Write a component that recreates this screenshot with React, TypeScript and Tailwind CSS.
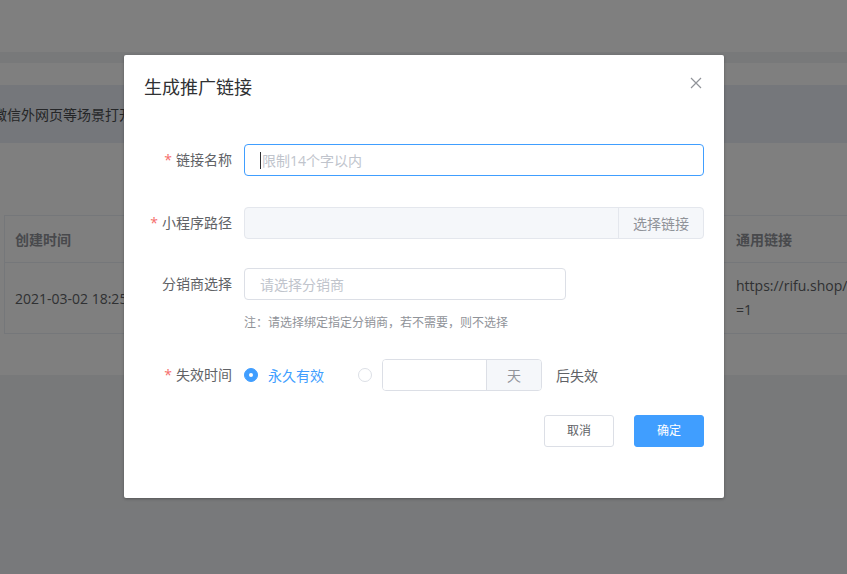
import React from 'react';

const FONT = '"Open Sans", "Noto Sans CJK SC", Helvetica, Arial, sans-serif';

function Label({ text, required }: { text: string; required?: boolean }) {
  return (
    <div className="w-[100px] shrink-0 pr-[12px] text-right text-[14px] leading-[20px] text-[#606266]">
      {required && <span className="mr-[4px] text-[#f56c6c]">*</span>}
      {text}
    </div>
  );
}

function Radio({ checked }: { checked?: boolean }) {
  if (checked) {
    return (
      <span className="flex h-[14px] w-[14px] items-center justify-center rounded-full border border-[#409eff] bg-[#409eff]">
        <span className="h-[4px] w-[4px] rounded-full bg-white" />
      </span>
    );
  }
  return <span className="h-[14px] w-[14px] rounded-full border border-[#dcdfe6] bg-white" />;
}

function BackgroundPage() {
  return (
    <div className="flex h-full w-full flex-col bg-[#f0f2f5]">
      <div className="h-[52px] shrink-0 bg-white" />
      <div className="h-[11px] shrink-0" />
      <div className="shrink-0 bg-white">
        <div className="h-[22px]" />
        <div className="flex h-[58px] items-center overflow-hidden bg-[#ebeff6] text-[14px] text-[#4a4c50]">
          <span className="ml-[-7px] whitespace-nowrap">微信外网页等场景打开，可复制链接后发送给用户使用</span>
        </div>
        <div className="h-[72px]" />
        <div className="ml-[4px] flex border-l border-[#ebeef5]">
          <div className="w-[300px] shrink-0">
            <div className="flex h-[48px] items-center border-y border-[#ebeef5] pl-[10px] text-[14px] font-bold text-[#909399]">
              创建时间
            </div>
            <div className="flex h-[71px] items-center border-b border-[#ebeef5] pl-[10px] text-[14px] text-[#606266]">
              2021-03-02 18:25:12
            </div>
          </div>
          <div className="w-[420px] shrink-0">
            <div className="h-[48px] border-y border-[#ebeef5]" />
            <div className="h-[71px] border-b border-[#ebeef5]" />
          </div>
          <div className="w-[130px] shrink-0 overflow-hidden">
            <div className="flex h-[48px] items-center border-y border-[#ebeef5] pl-[11px] text-[14px] font-bold text-[#909399]">
              通用链接
            </div>
            <div className="flex h-[71px] flex-col justify-center border-b border-[#ebeef5] pl-[11px] text-[14px] leading-[24px] text-[#606266]">
              <span className="whitespace-nowrap">https://rifu.shop/pages/index?id</span>
              <span>=1</span>
            </div>
          </div>
        </div>
        <div className="h-[41px]" />
      </div>
    </div>
  );
}

function Dialog() {
  return (
    <div className="absolute left-[124px] top-[55px] flex h-[443px] w-[600px] flex-col rounded-[2px] bg-white shadow-[0_1px_3px_rgba(0,0,0,0.3)]">
      <div className="px-[20px] pt-[20px]">
        <div className="h-[24px] text-[18px] leading-[24px] text-[#303133]">生成推广链接</div>
      </div>
      <button className="absolute right-[22px] top-[22px] flex h-[12px] w-[12px] items-center justify-center">
        <svg width="12" height="12" viewBox="0 0 12 12" fill="none">
          <path d="M1 1L11 11M11 1L1 11" stroke="#909399" strokeWidth="1.2" />
        </svg>
      </button>

      <div className="px-[20px]">
        {/* 链接名称 */}
        <div className="mt-[45px] flex items-center">
          <Label text="链接名称" required />
          <div className="relative flex h-[32px] w-[460px] items-center rounded-[4px] border border-[#409eff] pl-[15px] text-[14px] text-[#c0c4cc]">
            <span className="absolute left-[15px] top-[7px] h-[17px] w-px bg-[#303133]" />
            <span className="ml-[2px]">限制14个字以内</span>
          </div>
        </div>

        {/* 小程序路径 */}
        <div className="mt-[31px] flex items-center">
          <Label text="小程序路径" required />
          <div className="flex h-[32px] w-[460px] overflow-hidden rounded-[4px] border border-[#e4e7ed] bg-[#f5f7fa]">
            <div className="flex-1" />
            <div className="flex w-[85px] items-center justify-center border-l border-[#e4e7ed] text-[14px] text-[#909399]">
              选择链接
            </div>
          </div>
        </div>

        {/* 分销商选择 */}
        <div className="mt-[29px] flex items-center">
          <Label text="分销商选择" />
          <div className="flex h-[32px] w-[322px] items-center rounded-[4px] border border-[#dcdfe6] pl-[15px] text-[14px] text-[#c0c4cc]">
            请选择分销商
          </div>
        </div>
        <div className="ml-[100px] mt-[15px] text-[12px] leading-[16px] text-[#909399]">
          注：请选择绑定指定分销商，若不需要，则不选择
        </div>

        {/* 失效时间 */}
        <div className="mt-[28px] flex h-[32px] items-center">
          <Label text="失效时间" required />
          <div className="flex items-center">
            <Radio checked />
            <span className="ml-[10px] text-[14px] text-[#409eff]">永久有效</span>
          </div>
          <div className="ml-[34px] flex items-center">
            <Radio />
            <div className="ml-[10px] flex h-[32px] w-[160px] overflow-hidden rounded-[4px] border border-[#dcdfe6]">
              <div className="flex-1 bg-white" />
              <div className="flex w-[55px] items-center justify-center border-l border-[#dcdfe6] bg-[#f5f7fa] text-[14px] text-[#909399]">
                天
              </div>
            </div>
            <span className="ml-[14px] text-[14px] text-[#606266]">后失效</span>
          </div>
        </div>

        {/* footer */}
        <div className="mt-[24px] flex justify-end gap-[20px]">
          <button className="flex h-[32px] w-[70px] items-center justify-center rounded-[3px] border border-[#dcdfe6] bg-white text-[12px] text-[#606266]">
            取消
          </button>
          <button className="flex h-[32px] w-[70px] items-center justify-center rounded-[3px] border border-[#409eff] bg-[#409eff] text-[12px] text-white">
            确定
          </button>
        </div>
      </div>
    </div>
  );
}

export default function App() {
  return (
    <div className="relative h-[574px] w-[847px] overflow-hidden" style={{ fontFamily: FONT }}>
      <BackgroundPage />
      <div className="absolute inset-0 bg-black/50" />
      <Dialog />
    </div>
  );
}
